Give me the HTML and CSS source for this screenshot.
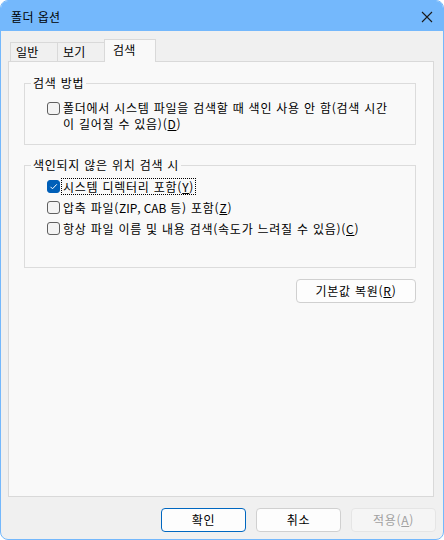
FILE: index.html
```html
<!DOCTYPE html>
<html lang="ko">
<head>
<meta charset="utf-8">
<title>폴더 옵션</title>
<link rel="stylesheet" href="styles.css">
</head>
<body>
<div class="window">
  <div class="titlebar">
    <span class="title">폴더 옵션</span>
    <svg class="close" width="12" height="12" viewBox="0 0 12 12"><path d="M1 1 L11 11 M11 1 L1 11" stroke="#1a1a1a" stroke-width="1.1" fill="none"/></svg>
  </div>
  <div class="content">
    <div class="tabs">
      <div class="tab">일반</div>
      <div class="tab">보기</div>
      <div class="tab selected">검색</div>
    </div>
    <div class="panel">
      <fieldset class="group">
        <legend>검색 방법</legend>
        <div class="group-body method">
          <label class="row multi">
            <span class="cb"></span>
            <span class="text">폴더에서 시스템 파일을 검색할 때 색인 사용 안 함(검색 시간<br>이 길어질 수 있음)(<u>D</u>)</span>
          </label>
        </div>
      </fieldset>
      <fieldset class="group second">
        <legend>색인되지 않은 위치 검색 시</legend>
        <div class="group-body nonindexed">
          <label class="row">
            <span class="cb checked"><svg width="13" height="13" viewBox="0 0 13 13"><path d="M3.5 6.8 L5.5 8.8 L9.8 4.3" stroke="#fff" stroke-width="1" fill="none"/></svg></span>
            <span class="text focus">시스템 디렉터리 포함(<u>Y</u>)</span>
          </label>
          <label class="row">
            <span class="cb"></span>
            <span class="text">압축 파일(<span class="latin">ZIP, CAB</span> 등) 포함(<u>Z</u>)</span>
          </label>
          <label class="row">
            <span class="cb"></span>
            <span class="text">항상 파일 이름 및 내용 검색(속도가 느려질 수 있음)(<u>C</u>)</span>
          </label>
        </div>
      </fieldset>
      <div class="restore-row">
        <button class="btn restore">기본값 복원(<u>R</u>)</button>
      </div>
    </div>
    <div class="buttons">
      <button class="btn default">확인</button>
      <button class="btn">취소</button>
      <button class="btn disabled">적용(<u>A</u>)</button>
    </div>
  </div>
</div>
</body>
</html>
```

FILE: styles.css
```css
* { box-sizing: border-box; }

html, body {
  margin: 0;
  padding: 0;
  background: #ffffff;
}

body {
  font-family: "Noto Sans CJK KR", "Noto Sans", sans-serif;
  font-size: 12px;
  letter-spacing: 0.75px;
  color: #000;
}

.window {
  width: 444px;
  height: 540px;
  border: 1px solid #74b8fc;
  border-radius: 8px;
  background: #f0f0f0;
  overflow: hidden;
  display: flex;
  flex-direction: column;
}

.titlebar {
  height: 30px;
  background: #74b8fc;
  display: flex;
  align-items: center;
  justify-content: space-between;
  padding: 0 9px 0 10px;
  flex-shrink: 0;
}

.title {
  font-size: 12px;
  line-height: 16px;
  margin-top: 1px;
  letter-spacing: 0.4px;
}

.close {
  display: block;
  margin-top: 1px;
  margin-right: 1px;
}

.content {
  flex: 1;
  padding: 8px 7px 0 7px;
  display: flex;
  flex-direction: column;
}

.tabs {
  height: 22px;
  display: flex;
  align-items: flex-end;
  padding-left: 2px;
}

.tab {
  height: 19px;
  width: 48px;
  border: 1px solid #d9d9d9;
  border-bottom: none;
  background: #f0f0f0;
  line-height: 17px;
  padding-left: 5px;
  letter-spacing: 0.3px;
}

.tab + .tab {
  margin-left: -1px;
}

.tab.selected {
  height: 23px;
  width: 52px;
  margin-bottom: -1px;
  background: #f9f9f9;
  padding-left: 8px;
  line-height: 19px;
  position: relative;
  z-index: 1;
}

.panel {
  width: 426px;
  height: 436px;
  background: #f9f9f9;
  border: 1px solid #d9d9d9;
  padding: 13px 17px 0 15px;
}

.group {
  margin: 0;
  padding: 0;
  border: 1px solid #dcdcdc;
  min-inline-size: 0;
}

.group.second {
  margin-top: 12px;
}

.group legend {
  margin-left: 6px;
  padding: 0 2px;
  line-height: 16px;
}

.group-body.method {
  padding: 10px 0 12px 22px;
}

.group-body.nonindexed {
  padding: 3px 0 28px 22px;
}

.row {
  display: flex;
  align-items: center;
  height: 21px;
}

.row.multi {
  height: auto;
  align-items: flex-start;
}

.row.multi .cb {
  margin-top: 1px;
}

.cb {
  width: 13px;
  height: 13px;
  border: 1px solid #606060;
  border-radius: 3px;
  background: #f4f4f4;
  flex-shrink: 0;
  margin-right: 3px;
  display: flex;
}

.cb.checked {
  background: #005fb8;
  border-color: #005fb8;
}

.cb.checked svg {
  margin: -1px;
}

.text {
  line-height: 15px;
}

.row.multi .text {
  line-height: 16px;
  margin-top: -1px;
}

.latin {
  letter-spacing: -0.1px;
}

.text.focus {
  outline: 1px dotted #000;
  outline-offset: 0;
  padding: 0 1px;
  margin-left: -1px;
}

u {
  text-decoration: underline;
  text-underline-offset: 1px;
}

.restore-row {
  display: flex;
  justify-content: flex-end;
  margin-top: 11px;
}

.btn {
  font-family: inherit;
  font-size: 12px;
  letter-spacing: 0.75px;
  color: #000;
  height: 24px;
  width: 85px;
  background: #fdfdfd;
  border: 1px solid #d0d0d0;
  border-radius: 4px;
  padding: 0;
  line-height: 20px;
}

.btn.restore {
  width: 120px;
}

.btn.default {
  border: 1px solid #0067c0;
}

.btn.disabled {
  background: #f5f5f5;
  border-color: #e5e5e5;
  color: #a0a0a0;
}

.buttons {
  display: flex;
  justify-content: flex-end;
  gap: 10px;
  margin-top: 11px;
}
```
